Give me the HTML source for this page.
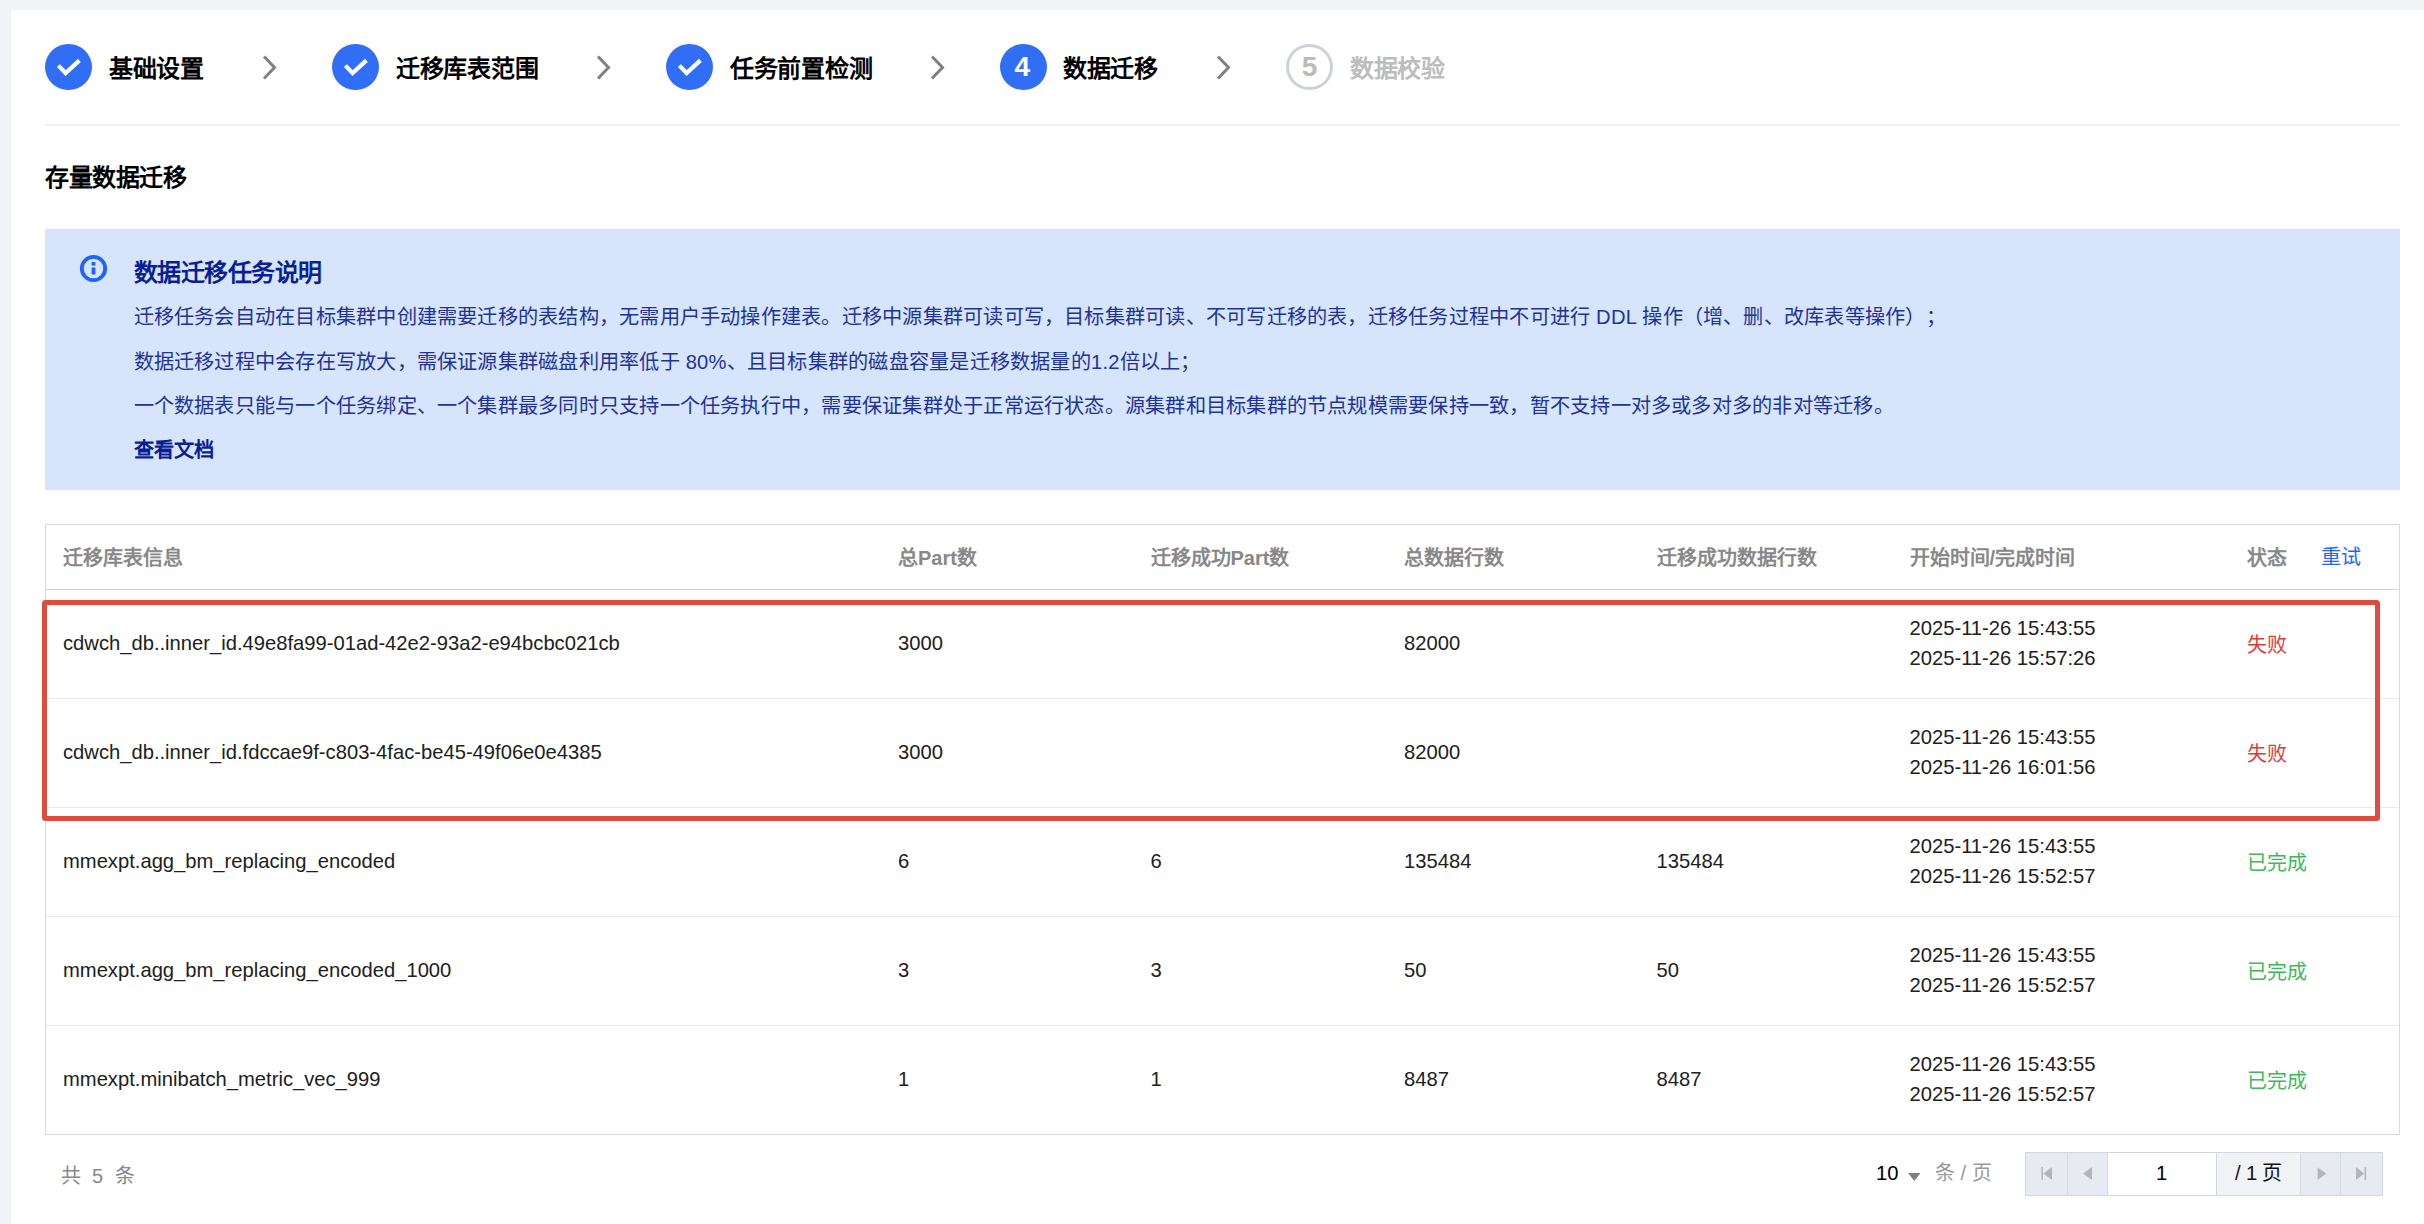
<!DOCTYPE html>
<html lang="zh-CN">
<head>
<meta charset="utf-8">
<style>
html,body{margin:0;padding:0;}
body{width:2424px;height:1224px;overflow:hidden;background:#f3f4f7;font-family:"Liberation Sans",sans-serif;position:relative;}
.panel{position:absolute;left:11px;top:10px;right:0;bottom:0;background:#fff;box-shadow:0 0 1.5px rgba(0,0,0,0.05);}
.a{position:absolute;white-space:nowrap;}
.circ{position:absolute;top:43.5px;width:47px;height:46.6px;border-radius:50%;background:#316ef6;}
.circ svg{position:absolute;left:0;top:0;}
.slabel{position:absolute;top:51px;letter-spacing:-0.3px;font-size:24px;line-height:35px;font-weight:700;color:#000;white-space:nowrap;}
.arrow{position:absolute;top:54.5px;margin-left:-0.4px;}
.divider{position:absolute;left:45px;width:2355px;top:124px;height:2px;background:#eef0f4;}
.heading{position:absolute;left:45px;top:160px;letter-spacing:-0.45px;font-size:24px;line-height:35px;font-weight:700;color:#000;}
.info{position:absolute;left:45px;top:229px;width:2355px;height:261px;background:#d6e5fc;}
.itxt{position:absolute;left:133.5px;font-size:20.2px;line-height:29px;color:#1f3397;white-space:nowrap;letter-spacing:0.233px;text-spacing-trim:space-all;}
.tbl{position:absolute;left:45px;top:523.8px;width:2354.8px;height:611px;border:1.5px solid #d6d9e1;box-sizing:border-box;}
.hline{position:absolute;left:46px;width:2353px;height:1px;background:#e6e9ee;}
.th{position:absolute;top:544px;font-size:20px;line-height:29px;font-weight:700;color:#888;white-space:nowrap;}
.td{position:absolute;font-size:20.2px;line-height:29.5px;color:#202020;white-space:nowrap;}
.tm{line-height:30.4px;}
.st{font-size:20px;}
.fail{color:#dd3c3c;}
.ok{color:#3db85a;}
.hb{background:#cdd4de;height:1px;}
</style>
</head>
<body>
<div class="panel"></div>

<!-- steps -->
<div class="circ" style="left:45px"><svg width="47" height="47"><path d="M13.4 21.6 L20.6 29 L34.4 16.4" fill="none" stroke="#fff" stroke-width="4.2"/></svg></div>
<div class="slabel" style="left:109px">基础设置</div>
<svg class="arrow" style="left:262px" width="15" height="25"><path d="M2 1.5 L12.5 12.5 L2 23.5" fill="none" stroke="#808080" stroke-width="3"/></svg>

<div class="circ" style="left:332px"><svg width="47" height="47"><path d="M13.4 21.6 L20.6 29 L34.4 16.4" fill="none" stroke="#fff" stroke-width="4.2"/></svg></div>
<div class="slabel" style="left:396px">迁移库表范围</div>
<svg class="arrow" style="left:596px" width="15" height="25"><path d="M2 1.5 L12.5 12.5 L2 23.5" fill="none" stroke="#808080" stroke-width="3"/></svg>

<div class="circ" style="left:666px"><svg width="47" height="47"><path d="M13.4 21.6 L20.6 29 L34.4 16.4" fill="none" stroke="#fff" stroke-width="4.2"/></svg></div>
<div class="slabel" style="left:730px">任务前置检测</div>
<svg class="arrow" style="left:930px" width="15" height="25"><path d="M2 1.5 L12.5 12.5 L2 23.5" fill="none" stroke="#808080" stroke-width="3"/></svg>

<div class="circ" style="left:1000px"><div class="a" style="left:-1.3px;width:47px;top:5.6px;text-align:center;font-size:28px;line-height:35px;font-weight:700;color:#fff">4</div></div>
<div class="slabel" style="left:1063px">数据迁移</div>
<svg class="arrow" style="left:1216px" width="15" height="25"><path d="M2 1.5 L12.5 12.5 L2 23.5" fill="none" stroke="#808080" stroke-width="3"/></svg>

<div class="circ" style="left:1286px;background:#fff;border:3px solid #cdd2da;box-sizing:border-box"><div class="a" style="left:0;width:41px;top:2.6px;text-align:center;font-size:28px;line-height:35px;font-weight:700;color:#bbb">5</div></div>
<div class="slabel" style="left:1350px;color:#bdbdbd">数据校验</div>

<div class="divider"></div>
<div class="heading">存量数据迁移</div>

<!-- info -->
<div class="info"></div>
<svg class="a" style="left:79px;top:254px" width="29" height="29"><circle cx="14.5" cy="14.5" r="11.7" fill="none" stroke="#1d63ff" stroke-width="3.8"/><rect x="12.6" y="8" width="3.8" height="3.6" fill="#1d63ff"/><rect x="12.6" y="13.5" width="3.8" height="7" fill="#1d63ff"/></svg>
<div class="itxt" style="top:255px;font-size:24px;line-height:35px;font-weight:700;color:#0a1f94;letter-spacing:-0.45px">数据迁移任务说明</div>
<div class="itxt" style="top:303px">迁移任务会自动在目标集群中创建需要迁移的表结构，无需用户手动操作建表。迁移中源集群可读可写，目标集群可读、不可写迁移的表，迁移任务过程中不可进行 DDL 操作（增、删、改库表等操作）；</div>
<div class="itxt" style="top:347.5px">数据迁移过程中会存在写放大，需保证源集群磁盘利用率低于 80%、且目标集群的磁盘容量是迁移数据量的1.2倍以上；</div>
<div class="itxt" style="top:391.5px">一个数据表只能与一个任务绑定、一个集群最多同时只支持一个任务执行中，需要保证集群处于正常运行状态。源集群和目标集群的节点规模需要保持一致，暂不支持一对多或多对多的非对等迁移。</div>
<div class="itxt" style="top:436px;font-weight:700;color:#0a1f94;letter-spacing:0">查看文档</div>

<!-- table -->
<div class="tbl"></div>
<!-- table header -->
<div class="th" style="left:63px">迁移库表信息</div>
<div class="th" style="left:898px">总Part数</div>
<div class="th" style="left:1150.5px">迁移成功Part数</div>
<div class="th" style="left:1404px">总数据行数</div>
<div class="th" style="left:1656.5px">迁移成功数据行数</div>
<div class="th" style="left:1909.5px">开始时间/完成时间</div>
<div class="th" style="left:2247px">状态</div>
<div class="th" style="left:2321px;top:543px;color:#1e66ff;font-weight:400">重试</div>
<div class="hline hb" style="top:589px"></div>
<div class="td" style="left:63px;top:629px">cdwch_db..inner_id.49e8fa99-01ad-42e2-93a2-e94bcbc021cb</div>
<div class="td" style="left:898px;top:629px">3000</div>
<div class="td" style="left:1404px;top:629px">82000</div>
<div class="td tm" style="left:1909.5px;top:613px">2025-11-26 15:43:55<br>2025-11-26 15:57:26</div>
<div class="td st fail" style="left:2247px;top:631px">失败</div>
<div class="hline" style="top:698px"></div>
<div class="td" style="left:63px;top:738px">cdwch_db..inner_id.fdccae9f-c803-4fac-be45-49f06e0e4385</div>
<div class="td" style="left:898px;top:738px">3000</div>
<div class="td" style="left:1404px;top:738px">82000</div>
<div class="td tm" style="left:1909.5px;top:722px">2025-11-26 15:43:55<br>2025-11-26 16:01:56</div>
<div class="td st fail" style="left:2247px;top:740px">失败</div>
<div class="hline" style="top:807px"></div>
<div class="td" style="left:63px;top:847px">mmexpt.agg_bm_replacing_encoded</div>
<div class="td" style="left:898px;top:847px">6</div>
<div class="td" style="left:1150.5px;top:847px">6</div>
<div class="td" style="left:1404px;top:847px">135484</div>
<div class="td" style="left:1656.5px;top:847px">135484</div>
<div class="td tm" style="left:1909.5px;top:831px">2025-11-26 15:43:55<br>2025-11-26 15:52:57</div>
<div class="td st ok" style="left:2247px;top:849px">已完成</div>
<div class="hline" style="top:916px"></div>
<div class="td" style="left:63px;top:956px">mmexpt.agg_bm_replacing_encoded_1000</div>
<div class="td" style="left:898px;top:956px">3</div>
<div class="td" style="left:1150.5px;top:956px">3</div>
<div class="td" style="left:1404px;top:956px">50</div>
<div class="td" style="left:1656.5px;top:956px">50</div>
<div class="td tm" style="left:1909.5px;top:940px">2025-11-26 15:43:55<br>2025-11-26 15:52:57</div>
<div class="td st ok" style="left:2247px;top:958px">已完成</div>
<div class="hline" style="top:1025px"></div>
<div class="td" style="left:63px;top:1065px">mmexpt.minibatch_metric_vec_999</div>
<div class="td" style="left:898px;top:1065px">1</div>
<div class="td" style="left:1150.5px;top:1065px">1</div>
<div class="td" style="left:1404px;top:1065px">8487</div>
<div class="td" style="left:1656.5px;top:1065px">8487</div>
<div class="td tm" style="left:1909.5px;top:1049px">2025-11-26 15:43:55<br>2025-11-26 15:52:57</div>
<div class="td st ok" style="left:2247px;top:1067px">已完成</div>

<!-- red annotation -->
<div class="a" style="left:42px;top:600.3px;width:2337.5px;height:220.4px;border:5px solid #de4c3e;border-radius:3.5px;box-sizing:border-box"></div>

<!-- footer -->
<div class="a" style="left:61px;top:1162px;font-size:20px;line-height:29px;color:#888">共<span style="margin-left:11px">5</span><span style="margin-left:12px">条</span></div>
<div class="a" style="left:1876px;top:1159px;font-size:20.2px;line-height:29px;color:#000">10</div>
<svg class="a" style="left:1907.5px;top:1172.5px" width="13" height="9"><path d="M0 0 L12.5 0 L6.25 8 Z" fill="#7f7f7f"/></svg>
<div class="a" style="left:1935px;top:1159px;font-size:20px;line-height:29px;color:#999">条 / 页</div>
<div class="a" style="left:2025px;top:1152px;width:358px;height:44px;border:1px solid #d3d8e0;box-sizing:border-box;background:#e7eaf0"></div>
<div class="a" style="left:2067px;top:1153px;width:1px;height:42px;background:#d3d8e0"></div>
<div class="a" style="left:2107px;top:1153px;width:110px;height:42px;background:#fff;border-left:1px solid #d3d8e0;border-right:1px solid #d3d8e0;box-sizing:border-box"></div>
<div class="a" style="left:2217px;top:1153px;width:84px;height:42px;background:#f2f3f7;border-right:1px solid #d3d8e0;box-sizing:border-box"></div>
<div class="a" style="left:2340px;top:1153px;width:1px;height:42px;background:#d3d8e0"></div>
<div class="a" style="left:2156px;top:1159px;font-size:20.2px;line-height:29px;color:#000">1</div>
<div class="a" style="left:2235px;top:1159px;font-size:20.2px;line-height:29px;color:#111">/</div>
<div class="a" style="left:2246px;top:1159px;font-size:20.2px;line-height:29px;color:#111">1</div>
<div class="a" style="left:2262px;top:1159px;font-size:20px;line-height:29px;color:#111">页</div>
<svg class="a" style="left:2040px;top:1166px" width="14" height="16"><rect x="1.4" y="1" width="1.5" height="13" fill="#b4b5b9"/><path d="M3.4 7.5 L12 1 L12 14 Z" fill="#b4b5b9"/></svg>
<svg class="a" style="left:2082px;top:1166px" width="12" height="16"><path d="M1 7.5 L10 1 L10 14 Z" fill="#b4b5b9"/></svg>
<svg class="a" style="left:2317px;top:1166px" width="12" height="16"><path d="M9.2 7.5 L0.6 1.3 L0.6 14.1 Z" fill="#b4b5b9"/></svg>
<svg class="a" style="left:2355px;top:1166px" width="14" height="16"><path d="M9.2 7.5 L1 1 L1 14 Z" fill="#b4b5b9"/><rect x="9.6" y="1" width="1.5" height="13" fill="#b4b5b9"/></svg>
</body>
</html>
